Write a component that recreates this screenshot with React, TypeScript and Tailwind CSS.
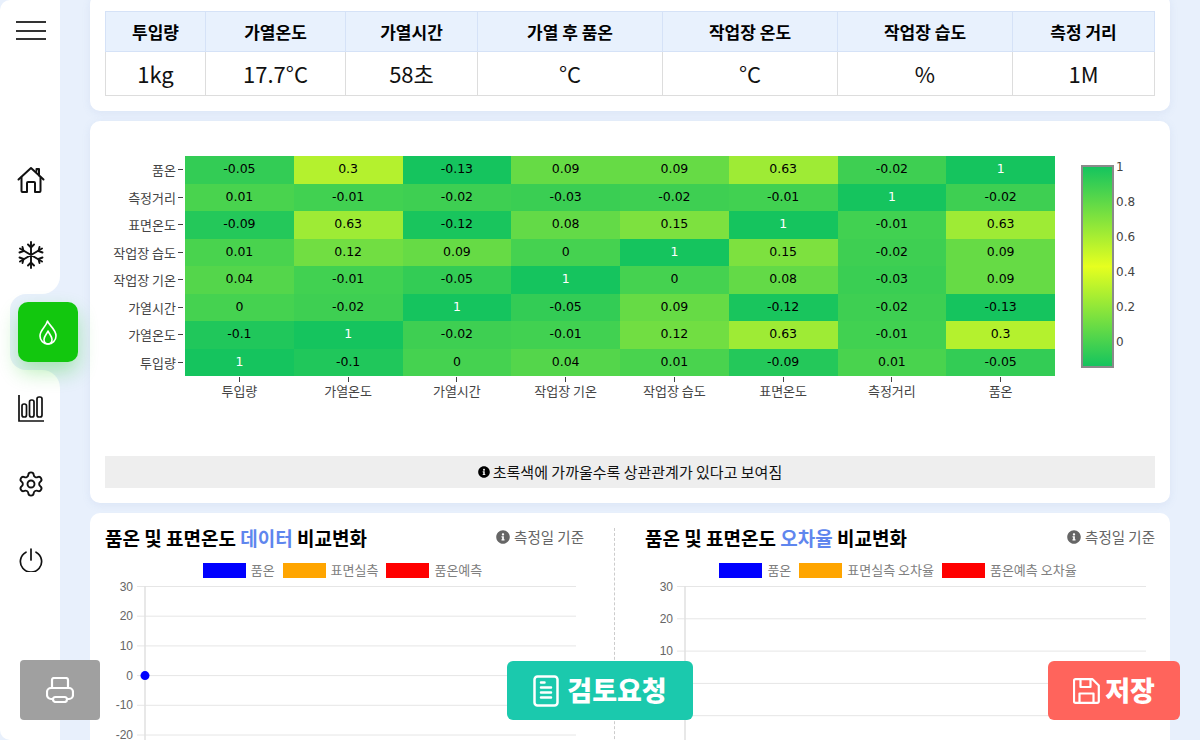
import React from "react";
import { FaInfoCircle } from "react-icons/fa";
import { Settings } from "lucide-react";

const labels = ["투입량", "가열온도", "가열시간", "작업장 기온", "작업장 습도", "표면온도", "측정거리", "품온"];

// rows top to bottom, same order as the picture
const rows = [
  { name: "품온", values: [-0.05, 0.3, -0.13, 0.09, 0.09, 0.63, -0.02, 1] },
  { name: "측정거리", values: [0.01, -0.01, -0.02, -0.03, -0.02, -0.01, 1, -0.02] },
  { name: "표면온도", values: [-0.09, 0.63, -0.12, 0.08, 0.15, 1, -0.01, 0.63] },
  { name: "작업장 습도", values: [0.01, 0.12, 0.09, 0, 1, 0.15, -0.02, 0.09] },
  { name: "작업장 기온", values: [0.04, -0.01, -0.05, 1, 0, 0.08, -0.03, 0.09] },
  { name: "가열시간", values: [0, -0.02, 1, -0.05, 0.09, -0.12, -0.02, -0.13] },
  { name: "가열온도", values: [-0.1, 1, -0.02, -0.01, 0.12, 0.63, -0.01, 0.3] },
  { name: "투입량", values: [1, -0.1, 0, 0.04, 0.01, -0.09, 0.01, -0.05] },
];

const heatColor = (v: number) => {
  const t = v < 0.435 ? (v + 0.13) / 0.565 : (1 - v) / 0.565;
  const r = Math.round(21 + t * 209);
  const g = Math.round(196 + t * 59);
  const b = Math.round(94 - t * 63);
  return `rgb(${r},${g},${b})`;
};

const tableCols = [
  { head: "투입량", value: "1kg", w: "w-[100px]" },
  { head: "가열온도", value: "17.7°C", w: "w-[140px]" },
  { head: "가열시간", value: "58초", w: "w-[132px]" },
  { head: "가열 후 품온", value: "°C", w: "w-[185px]" },
  { head: "작업장 온도", value: "°C", w: "w-[175px]" },
  { head: "작업장 습도", value: "%", w: "w-[175px]" },
  { head: "측정 거리", value: "1M", w: "w-[142px]" },
];

function HomeIcon() {
  return (
    <svg width="28" height="28" viewBox="0 0 28 28" fill="none" stroke="#111" strokeWidth="2" strokeLinejoin="round" strokeLinecap="round">
      <path d="M1.500 13.500 14 2l12.500 11.500" />
      <path d="M19.500 5V3h2.500v6.500" />
      <path d="M4.500 11.500V25a1 1 0 0 0 1 1H10v-9a1 1 0 0 1 1-1h6a1 1 0 0 1 1 1v9h4.500a1 1 0 0 0 1-1V11.500" />
    </svg>
  );
}

function SnowIcon() {
  return (
    <svg width="28" height="28" viewBox="0 0 28 28" fill="none" stroke="#111" strokeWidth="1.900" strokeLinecap="round" strokeLinejoin="round">
      <path d="M14 1v26M3 7.500l22 13M3 20.500l22-13" />
      <path d="M11 3.500l3 3 3-3M11 24.500l3-3 3 3" />
      <path d="M2.500 11.500l4-1.500-1-4M25.500 16.500l-4 1.500 1 4M2.500 16.500l4 1.500-1 4M25.500 11.500l-4-1.500 1-4" />
    </svg>
  );
}

function FlameIcon() {
  return (
    <svg width="18" height="25" viewBox="0 0 18 25" fill="none" stroke="#fff" strokeWidth="1.600" strokeLinejoin="round">
      <path d="M8.500 1C9.500 5 17 9 17 16c0 4.500-3.500 8-8 8s-8-3.500-8-8C1 10 7 7 8.500 1Z" />
      <path d="M9 11c1 3 4 5 4 8.500 0 2.500-1.800 4.500-4 4.500s-4-2-4-4.500C5 16 8 14 9 11Z" />
    </svg>
  );
}

function BarsIcon() {
  return (
    <svg width="28" height="28" viewBox="0 0 28 28" fill="none" stroke="#111" strokeWidth="1.700">
      <path d="M2 1v26h25" />
      <rect x="5" y="10" width="4.500" height="13" rx="2" />
      <rect x="12.500" y="6" width="4.500" height="17" rx="2" />
      <rect x="20" y="3" width="5" height="20" rx="2" />
    </svg>
  );
}

function PowerIcon() {
  return (
    <svg width="24" height="24" viewBox="0 0 24 24" fill="none" stroke="#111" strokeWidth="1.700" strokeLinecap="round">
      <path d="M12 1v11" />
      <path d="M7 4.200a10.600 10.600 0 1 0 10 0" />
    </svg>
  );
}

function PrinterIcon() {
  return (
    <svg width="28" height="26" viewBox="0 0 28 26" fill="none" stroke="#fff" strokeWidth="2.200" strokeLinejoin="round">
      <path d="M6 11V3a2 2 0 0 1 2-2h12a2 2 0 0 1 2 2v8" />
      <path d="M7 22H5a4 4 0 0 1-4-4v-3a4 4 0 0 1 4-4h18a4 4 0 0 1 4 4v3a4 4 0 0 1-4 4h-2" />
      <rect x="7" y="20" width="14" height="5" rx="2.500" />
    </svg>
  );
}

function DocIcon() {
  return (
    <svg width="26" height="32" viewBox="0 0 26 32" fill="none" stroke="#fff" strokeWidth="2.500" strokeLinecap="round">
      <rect x="1.500" y="1.500" width="23" height="29" rx="3" />
      <path d="M8 7.500h3.500M8 12.500h10M8 17.500h10M8 22.500h10" />
    </svg>
  );
}

function SaveIcon() {
  return (
    <svg width="27" height="26" viewBox="0 0 27 26" fill="none" stroke="#fff" strokeWidth="2.200" strokeLinejoin="round">
      <path d="M2.500 1.200h17l6.300 6.300v15.800a1.500 1.500 0 0 1-1.500 1.500H2.500A1.500 1.500 0 0 1 1 23.300V2.700a1.500 1.500 0 0 1 1.500-1.500Z" />
      <path d="M7.500 1.500v7.500h10V1.500" />
      <path d="M6.500 24.500v-9h14v9" />
    </svg>
  );
}

function Heatmap() {
  return (
    <div className="flex font-['DejaVu_Sans','Noto_Sans_CJK_KR',sans-serif] text-[12.500px] text-black">
      <div className="w-[80px]">
        <div className="flex flex-col">
          {rows.map((row) => (
            <div key={row.name} className="h-[27.500px] flex items-center justify-end font-['Noto_Sans_CJK_KR',sans-serif] text-[13px] text-[#444]">
              <span>{row.name}</span>
              <span className="ml-[2px] mr-[2px] w-[5px] h-[1px] bg-[#444]"></span>
            </div>
          ))}
        </div>
      </div>
      <div className="w-[870px]">
        <div className="grid grid-cols-8">
          {rows.map((row) =>
            row.values.map((v, i) => (
              <div
                key={row.name + i}
                className={`h-[27.500px] flex items-center justify-center ${v === 1 ? "text-white" : "text-black"}`}
                style={{ backgroundColor: heatColor(v) }}
              >
                {v}
              </div>
            ))
          )}
        </div>
        <div className="grid grid-cols-8 font-['Noto_Sans_CJK_KR',sans-serif] text-[13px] text-[#444]">
          {labels.map((l) => (
            <div key={l} className="flex flex-col items-center">
              <span className="w-[1px] h-[5px] mt-[1px] bg-[#444]"></span>
              <span className="leading-[18px]">{l}</span>
            </div>
          ))}
        </div>
      </div>
      <div className="ml-[26px] mt-[9px] w-[33px] h-[203px] border-2 border-[#8a8a8a] bg-[linear-gradient(to_bottom,#15c45e,#e6ff1f_50%,#15c45e)]"></div>
      <div className="ml-[2px] mt-[3.500px] flex flex-col gap-[21.200px] text-[12px] text-[#444]">
        {["1", "0.8", "0.6", "0.4", "0.2", "0"].map((t) => (
          <span key={t} className="h-[14px] leading-[14px]">{t}</span>
        ))}
      </div>
    </div>
  );
}

function LineChart({ ticks, step, axisX, right, dot }: { ticks: number[]; step: number; axisX: number; right: number; dot?: boolean }) {
  return (
    <svg width="510" height="170" className="block">
      {ticks.map((t, i) => {
        const y = 7.500 + i * step;
        return (
          <g key={t}>
            <line x1={axisX - 8} x2={right} y1={y} y2={y} stroke="#e6e6e6" strokeWidth="1" />
            <text x={axisX - 12} y={y + 4} textAnchor="end" fontSize="12" fill="#666" fontFamily="Liberation Sans, sans-serif">
              {t}
            </text>
          </g>
        );
      })}
      <line x1={axisX} x2={axisX} y1="7" y2="170" stroke="#e0e0e0" strokeWidth="1.500" />
      {dot && <circle cx={axisX} cy={7.500 + 3 * step} r="4.500" fill="#0000ff" />}
    </svg>
  );
}

function Legend({ items }: { items: { color: string; label: string }[] }) {
  return (
    <div className="flex justify-center gap-[8px] pr-[4px] text-[13px] leading-[15px] text-[#808080]">
      {items.map((item) => (
        <div key={item.label} className="flex items-center gap-[5px]">
          <span className={`w-[43px] h-[15px] ${item.color}`}></span>
          <span className="-mt-[2px]">{item.label}</span>
        </div>
      ))}
    </div>
  );
}

function ChartHead({ word }: { word: string }) {
  return (
    <div className="flex items-start justify-between h-[24px]">
      <h3 className="-mt-[2px] text-[19px] leading-[24px] font-bold text-black">
        품온 및 표면온도 <span className="text-[#5f86ee]">{word}</span> 비교변화
      </h3>
      <span className="flex items-center gap-[4px] text-[14.500px] leading-[18px] text-[#666]">
        <FaInfoCircle size={14} />
        측정일 기준
      </span>
    </div>
  );
}

export default function App() {
  return (
    <div className="relative w-[1200px] h-[740px] overflow-hidden flex bg-[#e8f0fc] font-['Noto_Sans_CJK_KR','Noto_Sans',sans-serif]">
      {/* Sidebar */}
      <aside className="relative w-[60px] h-full flex-none flex flex-col">
        <div className="h-[294px] bg-white rounded-tl-[10px] rounded-br-[18px] flex flex-col items-center pl-[2px]">
          <div className="mt-[21px] w-[30px] flex flex-col gap-[6.500px]">
            <span className="h-[2px] bg-[#333]"></span>
            <span className="h-[2px] bg-[#333]"></span>
            <span className="h-[2px] bg-[#333]"></span>
          </div>
          <div className="mt-[126px]"><HomeIcon /></div>
          <div className="mt-[47px]"><SnowIcon /></div>
        </div>
        <div className="relative h-[76px] bg-white flex">
          <div className="w-[10px]"></div>
          <div className="flex-1 rounded-l-[16px] bg-[#e8f0fc]"></div>
        </div>
        <div className="flex-1 bg-white rounded-bl-[10px] rounded-tr-[18px] flex flex-col items-center pl-[2px]">
          <div className="mt-[24px]"><BarsIcon /></div>
          <div className="mt-[48px] text-[#111]"><Settings size={28} strokeWidth={1.600} /></div>
          <div className="mt-[50px]"><PowerIcon /></div>
        </div>
        {/* active menu item sits over the notch */}
        <div className="absolute left-[18px] top-[302px] w-[60px] h-[60px] rounded-[10px] bg-[#12c70e] shadow-[0_10px_20px_rgba(18,199,14,0.3)] flex items-center justify-center">
          <FlameIcon />
        </div>
      </aside>

      {/* Main */}
      <main className="flex-1 px-[30px] flex flex-col gap-[10px]">
        <section className="-mt-[6px] pt-[17px] px-[15px] pb-[15px] rounded-[10px] bg-white shadow-[0_2px_8px_rgba(120,150,200,0.12)]">
          <table className="w-[1049px] table-fixed border-collapse">
            <thead>
              <tr>
                {tableCols.map((c) => (
                  <th key={c.head} className={`${c.w} h-[40px] border border-[#d5e2f7] bg-[#e8f1fd] text-[17px] font-bold text-black`}>{c.head}</th>
                ))}
              </tr>
            </thead>
            <tbody>
              <tr>
                {tableCols.map((c) => (
                  <td key={c.head} className="h-[44px] border border-[#ddd] text-center text-[22px] text-[#111]">{c.value}</td>
                ))}
              </tr>
            </tbody>
          </table>
        </section>

        <section className="h-[382px] flex-none pt-[35px] px-[15px] rounded-[10px] bg-white shadow-[0_2px_8px_rgba(120,150,200,0.12)] flex flex-col">
          <Heatmap />
          <div className="mt-auto mb-[15px] h-[32px] flex items-center justify-center gap-[3px] bg-[#eee] text-[15px] text-[#111]">
            <FaInfoCircle size={12} className="text-black" />
            초록색에 가까울수록 상관관계가 있다고 보여짐
          </div>
        </section>

        <section className="flex-1 px-[15px] pt-[15px] rounded-t-[10px] bg-white flex">
          <div className="w-[510px] flex-none pr-[30px] border-r border-dashed border-[#ccc]">
            <ChartHead word="데이터" />
            <div className="mt-[11px]">
              <Legend items={[
                { color: "bg-[#0000ff]", label: "품온" },
                { color: "bg-[#ffa500]", label: "표면실측" },
                { color: "bg-[#ff0000]", label: "품온예측" },
              ]} />
            </div>
            <div className="mt-[1px]">
              <LineChart ticks={[30, 20, 10, 0, -10, -20]} step={29.700} axisX={40} right={471} dot />
            </div>
          </div>
          <div className="flex-1 pl-[30px]">
            <ChartHead word="오차율" />
            <div className="mt-[11px]">
              <Legend items={[
                { color: "bg-[#0000ff]", label: "품온" },
                { color: "bg-[#ffa500]", label: "표면실측 오차율" },
                { color: "bg-[#ff0000]", label: "품온예측 오차율" },
              ]} />
            </div>
            <div className="mt-[1px]">
              <LineChart ticks={[30, 20, 10, 0, -10]} step={32.300} axisX={40} right={501} />
            </div>
          </div>
        </section>
      </main>

      {/* Floating buttons */}
      <button className="absolute left-[20px] top-[660px] w-[80px] h-[60px] rounded-[4px] bg-[#a0a0a0] flex items-center justify-center">
        <PrinterIcon />
      </button>
      <button className="absolute left-[507px] top-[661px] w-[186px] h-[59px] rounded-[6px] bg-[#1bc9ad] flex items-center justify-center gap-[8px] text-white text-[27px] font-black">
        <DocIcon />
        검토요청
      </button>
      <button className="absolute left-[1048px] top-[661px] w-[132px] h-[59px] rounded-[6px] bg-[#ff645c] flex items-center justify-center gap-[5px] text-white text-[27px] font-black">
        <SaveIcon />
        저장
      </button>
    </div>
  );
}
